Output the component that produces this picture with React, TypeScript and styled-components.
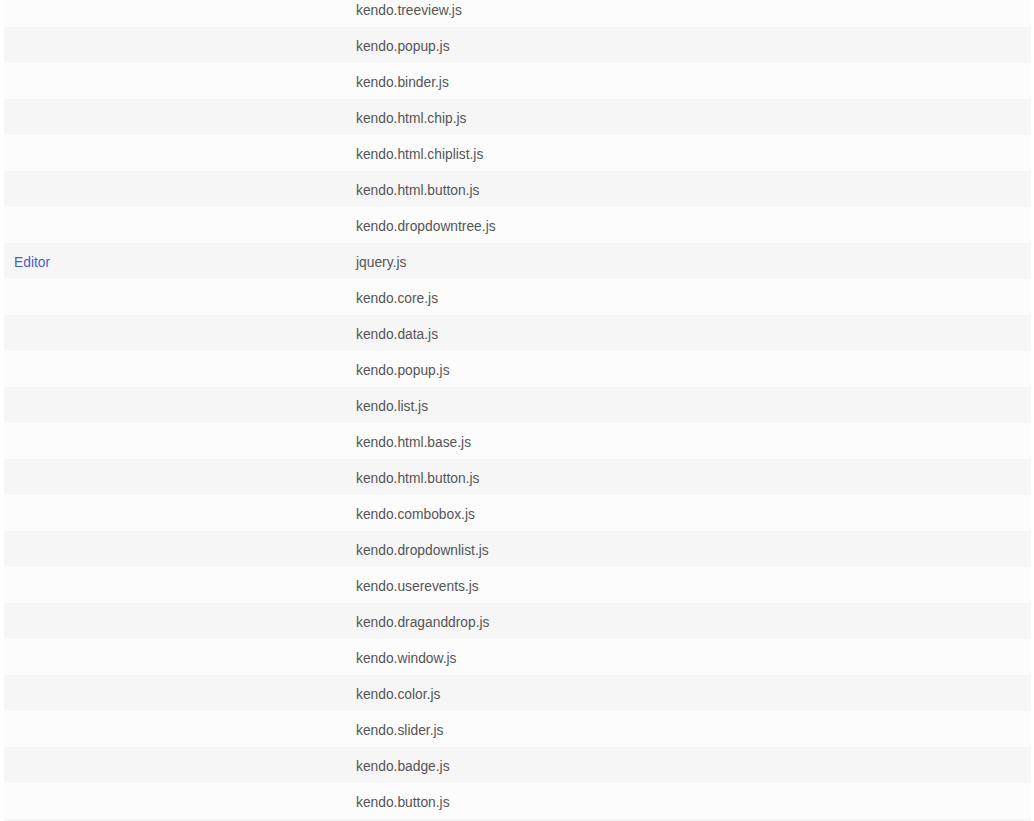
import React from 'react';
import styled, { createGlobalStyle } from 'styled-components';

const GlobalStyle = createGlobalStyle`
    html, body {
        margin: 0;
        padding: 0;
        background: #ffffff;
    }
`;

const Page = styled.div`
    padding: 0 3px 0 4px;
    height: 821px;
    overflow: hidden;
    font-family: "Liberation Sans", Arial, sans-serif;
    font-size: 13.8px;
`;

const Table = styled.table`
    width: 100%;
    margin-top: -9px;
    border-collapse: collapse;
    table-layout: fixed;
`;

const Row = styled.tr<{ $alt: boolean }>`
    height: 36px;
    background: ${(p) => (p.$alt ? '#f6f6f6' : '#fcfcfc')};
`;

const WidgetCell = styled.td`
    width: 322px;
    padding: 2px 10px 0;
    vertical-align: middle;
`;

const WidgetLink = styled.a`
    color: #4a5bd3;
    text-decoration: none;
`;

const FileCell = styled.td`
    padding: 2px 10px 0;
    color: #555555;
    vertical-align: middle;
`;

type Entry = { widget?: string; file: string };

const entries: Entry[] = [
    { file: 'kendo.treeview.js' },
    { file: 'kendo.popup.js' },
    { file: 'kendo.binder.js' },
    { file: 'kendo.html.chip.js' },
    { file: 'kendo.html.chiplist.js' },
    { file: 'kendo.html.button.js' },
    { file: 'kendo.dropdowntree.js' },
    { widget: 'Editor', file: 'jquery.js' },
    { file: 'kendo.core.js' },
    { file: 'kendo.data.js' },
    { file: 'kendo.popup.js' },
    { file: 'kendo.list.js' },
    { file: 'kendo.html.base.js' },
    { file: 'kendo.html.button.js' },
    { file: 'kendo.combobox.js' },
    { file: 'kendo.dropdownlist.js' },
    { file: 'kendo.userevents.js' },
    { file: 'kendo.draganddrop.js' },
    { file: 'kendo.window.js' },
    { file: 'kendo.color.js' },
    { file: 'kendo.slider.js' },
    { file: 'kendo.badge.js' },
    { file: 'kendo.button.js' },
    // next row only peeks in at the bottom edge
    { file: '' },
];

export default function App() {
    return (
        <>
            <GlobalStyle />
            <Page>
                <Table>
                    <tbody>
                        {entries.map((e, i) => (
                            <Row key={i} $alt={i % 2 === 1}>
                                <WidgetCell>
                                    {e.widget && <WidgetLink href="#">{e.widget}</WidgetLink>}
                                </WidgetCell>
                                <FileCell>{e.file}</FileCell>
                            </Row>
                        ))}
                    </tbody>
                </Table>
            </Page>
        </>
    );
}
